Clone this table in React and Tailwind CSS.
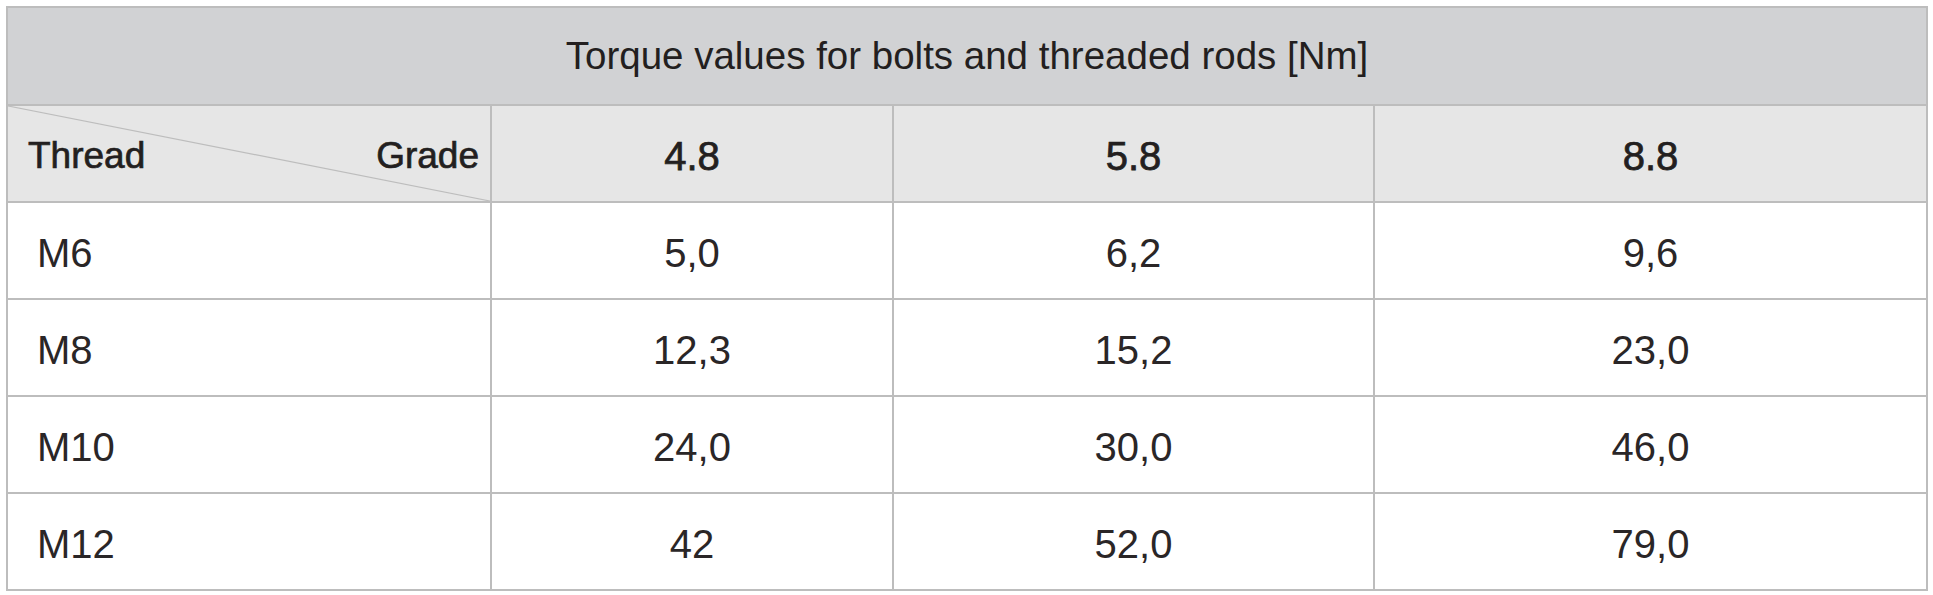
const grades = ["4.8", "5.8", "8.8"];

const rows = [
  { thread: "M6", values: ["5,0", "6,2", "9,6"] },
  { thread: "M8", values: ["12,3", "15,2", "23,0"] },
  { thread: "M10", values: ["24,0", "30,0", "46,0"] },
  { thread: "M12", values: ["42", "52,0", "79,0"] },
];

const App = () => {
  return (
    <div className="w-[1933px] h-[595px] bg-white p-[6px] font-['Liberation_Sans',Arial,sans-serif] text-[#231f20]">
      <table className="w-[1922px] border-collapse table-fixed border-2 border-[#bdbdbd]">
        <colgroup>
          <col className="w-[484px]" />
          <col className="w-[402px]" />
          <col className="w-[481px]" />
          <col />
        </colgroup>
        <thead>
          {/* title band */}
          <tr className="h-[98px] bg-[#d1d2d4]">
            <th colSpan={4} className="text-center text-[38.5px] font-normal leading-none">
              Torque values for bolts and threaded rods [Nm]
            </th>
          </tr>
          <tr className="h-[97px] bg-[#e6e6e6]">
            <th className="relative p-0 border-2 border-[#bdbdbd] font-normal text-[37px] leading-none [-webkit-text-stroke:0.7px_#231f20]">
              <svg className="absolute inset-0 w-full h-full" viewBox="0 0 100 100" preserveAspectRatio="none">
                <line x1="0" y1="0" x2="100" y2="100" stroke="#bdbdbd" strokeWidth="1.2" vectorEffect="non-scaling-stroke" />
              </svg>
              <div className="relative flex items-center justify-between pl-[20px] pr-[11px] pt-[4px]">
                <span>Thread</span>
                <span>Grade</span>
              </div>
            </th>
            {grades.map((g) => (
              <th key={g} className="border-2 border-[#bdbdbd] text-center font-normal text-[40px] leading-none pt-[4px] [-webkit-text-stroke:0.75px_#231f20]">
                {g}
              </th>
            ))}
          </tr>
        </thead>
        <tbody>
          {rows.map((row) => (
            <tr key={row.thread} className="h-[97px]">
              <td className="border-2 border-[#bdbdbd] pl-[29px] text-[40px] leading-none pt-[4px] text-[#2a2627]">{row.thread}</td>
              {row.values.map((v, j) => (
                <td key={j} className="border-2 border-[#bdbdbd] text-center text-[40px] leading-none pt-[4px] text-[#2a2627]">
                  {v}
                </td>
              ))}
            </tr>
          ))}
        </tbody>
      </table>
    </div>
  );
};

export default App;
